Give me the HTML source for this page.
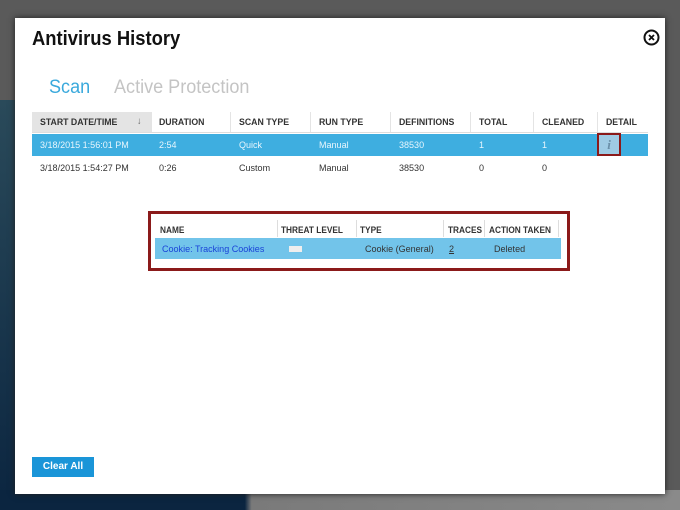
<!DOCTYPE html>
<html><head><style>
body{margin:0;width:680px;height:510px;background:#5a5a5a;position:relative;overflow:hidden;font-family:"Liberation Sans",sans-serif}
.bgl{position:absolute;left:0;top:100px;width:20px;height:410px;background:linear-gradient(#2a4a5a,#0b2540)}
.bgb{position:absolute;left:0;top:490px;width:680px;height:20px;background:linear-gradient(90deg,#0b2540 0,#0b2540 36%,#7a7a7a 37%,#8a8a8a)}
.dlg{position:absolute;left:15px;top:18px;width:650px;height:476px;background:#fff;box-shadow:0 0 6px #222}
.a{position:absolute;white-space:nowrap}
.h{font-size:9.5px;color:#333;font-weight:bold;transform:scaleX(.92);transform-origin:left}
.t{font-size:9.5px;color:#333;transform:scaleX(.95);transform-origin:left}
.w{color:#e8f6fd}
</style></head><body>
<div class="bgl"></div><div class="bgb"></div>
<div class="dlg"></div>
<div class="a" style="left:32px;top:28px;font-size:20px;font-weight:bold;color:#111;transform:scaleX(.92);transform-origin:left">Antivirus History</div>
<svg class="a" style="left:643px;top:29px" width="17" height="17"><circle cx="8.5" cy="8.5" r="7" fill="none" stroke="#111" stroke-width="2"/><path d="M6 6L11 11M11 6L6 11" stroke="#111" stroke-width="1.8"/></svg>
<div class="a" style="left:49px;top:77px;font-size:19px;color:#3aa9dc;transform:scaleX(.95);transform-origin:left">Scan</div>
<div class="a" style="left:114px;top:77px;font-size:19px;color:#c4c4c4;transform:scaleX(.95);transform-origin:left">Active Protection</div>
<div class="a" style="left:32px;top:112px;width:120px;height:21px;background:#e4e4e4"></div>
<div class="a" style="left:32px;top:132px;width:616px;height:1px;background:#ddd"></div>
<div class="a" style="left:32px;top:134px;width:616px;height:22px;background:#3eaee0"></div>
<div class="a h" style="left:40px;top:117px">START DATE/TIME</div>
<div class="a t" style="left:137px;top:116px;color:#666">↓</div>
<div class="a h" style="left:159px;top:117px">DURATION</div>
<div class="a h" style="left:239px;top:117px">SCAN TYPE</div>
<div class="a h" style="left:319px;top:117px">RUN TYPE</div>
<div class="a h" style="left:399px;top:117px">DEFINITIONS</div>
<div class="a h" style="left:479px;top:117px">TOTAL</div>
<div class="a h" style="left:542px;top:117px">CLEANED</div>
<div class="a h" style="left:606px;top:117px">DETAIL</div>
<div class="a" style="left:150px;top:112px;width:1px;height:20px;background:#e4e4e4"></div>
<div class="a" style="left:230px;top:112px;width:1px;height:20px;background:#e4e4e4"></div>
<div class="a" style="left:310px;top:112px;width:1px;height:20px;background:#e4e4e4"></div>
<div class="a" style="left:390px;top:112px;width:1px;height:20px;background:#e4e4e4"></div>
<div class="a" style="left:470px;top:112px;width:1px;height:20px;background:#e4e4e4"></div>
<div class="a" style="left:533px;top:112px;width:1px;height:20px;background:#e4e4e4"></div>
<div class="a" style="left:597px;top:112px;width:1px;height:20px;background:#e4e4e4"></div>
<div class="a t w" style="left:40px;top:140px">3/18/2015 1:56:01 PM</div>
<div class="a t w" style="left:159px;top:140px">2:54</div>
<div class="a t w" style="left:239px;top:140px">Quick</div>
<div class="a t w" style="left:319px;top:140px">Manual</div>
<div class="a t w" style="left:399px;top:140px">38530</div>
<div class="a t w" style="left:479px;top:140px">1</div>
<div class="a t w" style="left:542px;top:140px">1</div>
<div class="a" style="left:597px;top:133px;width:20px;height:19px;border:2px solid #8b1a1a;background:#9fcbe4;color:#6a8fa8;font-size:13px;font-weight:bold;font-style:italic;text-align:center;line-height:19px;font-family:'Liberation Serif',serif">i</div>
<div class="a t" style="left:40px;top:163px">3/18/2015 1:54:27 PM</div>
<div class="a t" style="left:159px;top:163px">0:26</div>
<div class="a t" style="left:239px;top:163px">Custom</div>
<div class="a t" style="left:319px;top:163px">Manual</div>
<div class="a t" style="left:399px;top:163px">38530</div>
<div class="a t" style="left:479px;top:163px">0</div>
<div class="a t" style="left:542px;top:163px">0</div>
<div class="a" style="left:148px;top:211px;width:416px;height:54px;border:3px solid #8b1a1a;background:#fff"></div>
<div class="a h" style="left:160px;top:225px;font-size:9px">NAME</div>
<div class="a h" style="left:281px;top:225px;font-size:9px">THREAT LEVEL</div>
<div class="a h" style="left:360px;top:225px;font-size:9px">TYPE</div>
<div class="a h" style="left:448px;top:225px;font-size:9px">TRACES</div>
<div class="a h" style="left:489px;top:225px;font-size:9px">ACTION TAKEN</div>
<div class="a" style="left:277px;top:220px;width:1px;height:17px;background:#ddd"></div>
<div class="a" style="left:356px;top:220px;width:1px;height:17px;background:#ddd"></div>
<div class="a" style="left:443px;top:220px;width:1px;height:17px;background:#ddd"></div>
<div class="a" style="left:484px;top:220px;width:1px;height:17px;background:#ddd"></div>
<div class="a" style="left:558px;top:220px;width:1px;height:17px;background:#ddd"></div>
<div class="a" style="left:155px;top:238px;width:406px;height:21px;background:#72c4ea"></div>
<div class="a t" style="left:162px;top:244px;color:#1a44d8">Cookie: Tracking Cookies</div>
<div class="a" style="left:289px;top:246px;width:13px;height:6px;background:#eee"></div>
<div class="a t" style="left:365px;top:244px">Cookie (General)</div>
<div class="a t" style="left:449px;top:244px;text-decoration:underline">2</div>
<div class="a t" style="left:494px;top:244px">Deleted</div>
<div class="a" style="left:32px;top:457px;width:62px;height:20px;background:#1a95d8;color:#fff;font-size:10px;font-weight:bold;text-align:center;line-height:20px">Clear All</div>
</body></html>
